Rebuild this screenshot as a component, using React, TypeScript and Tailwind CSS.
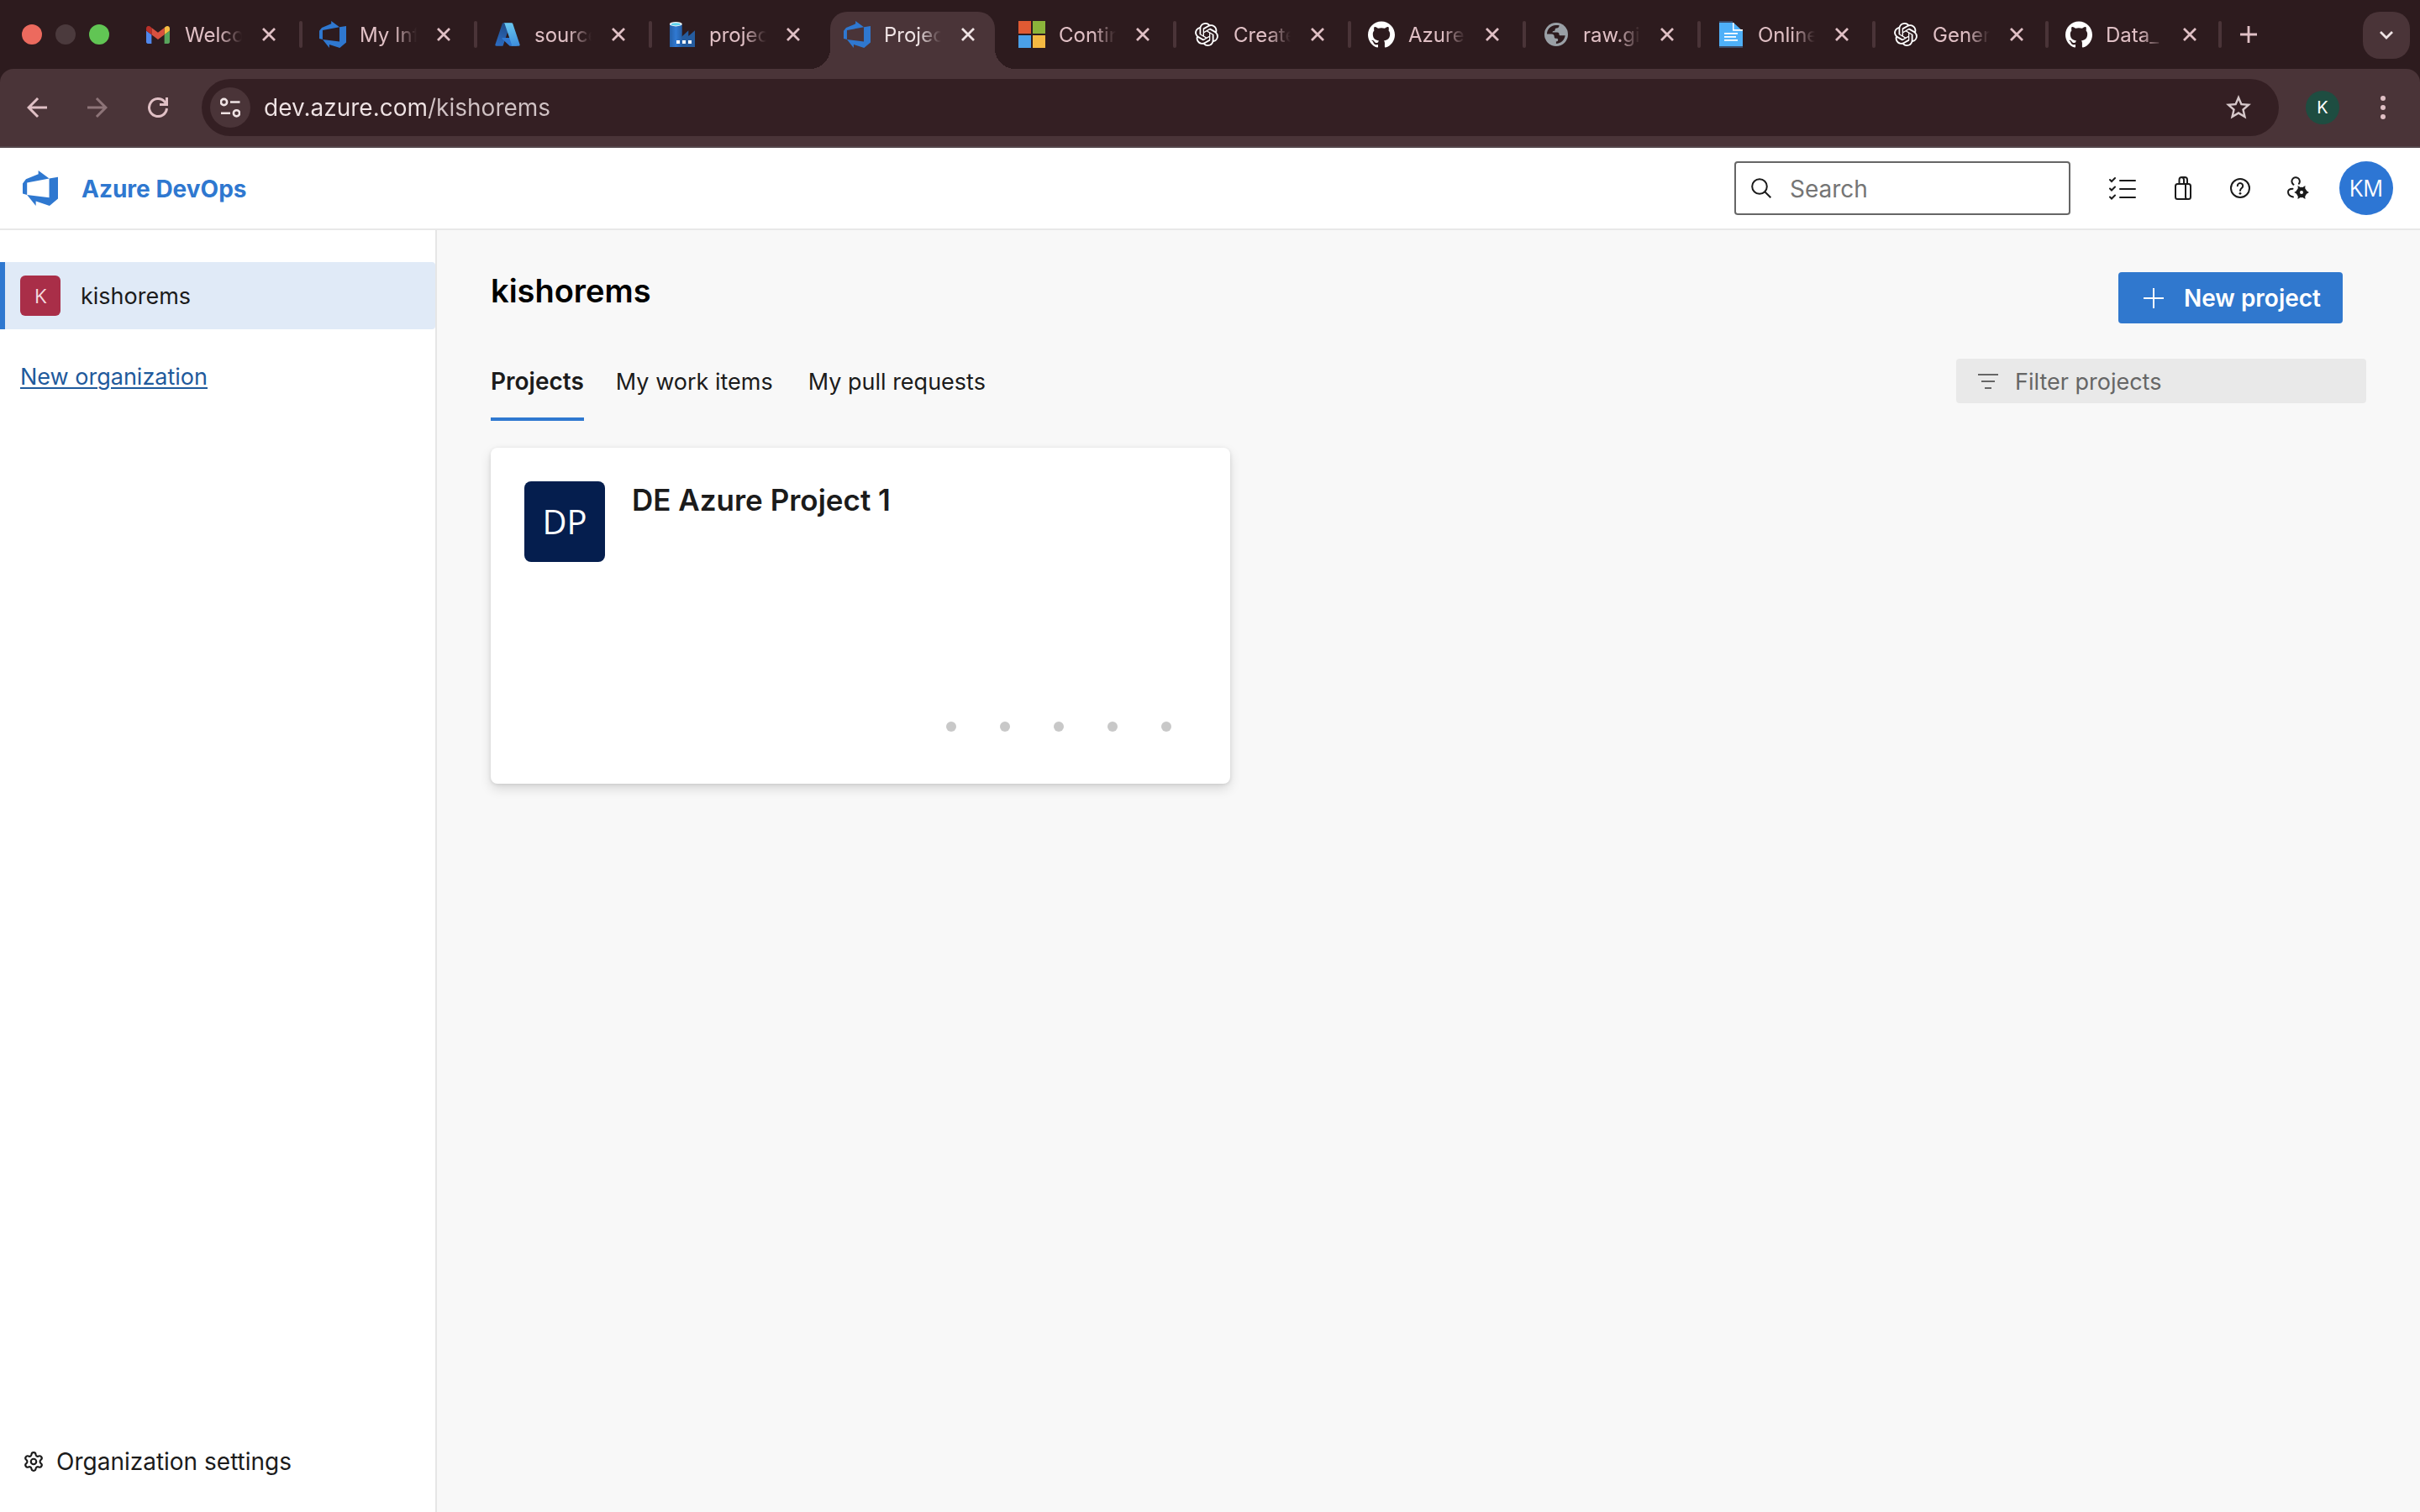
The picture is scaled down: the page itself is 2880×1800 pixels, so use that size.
import type { ReactNode } from "react";
import { Settings } from "lucide-react";
import { MdArrowBack, MdArrowForward, MdStarBorder } from "react-icons/md";
import { SiGithub, SiOpenai } from "react-icons/si";

function DevOpsLogo({ className }: { className: string }) {
  return (
    <svg viewBox="0 0 24 24" className={className} fill="#2f78d0" aria-hidden="true">
      <path d="M0 8.877L2.247 5.91l8.405-3.416V.022l7.37 5.393L2.966 8.338v8.225L0 15.707zm24-4.45v14.651l-5.753 4.9-9.303-3.057v3.056l-5.978-7.416 15.057 1.798V5.415z" />
    </svg>
  );
}

function GmailLogo() {
  return (
    <svg viewBox="52 42 88 66" className="w-[28px]" aria-hidden="true">
      <path fill="#5087ec" d="M58 108h14V74L52 59v43c0 3.32 2.69 6 6 6" />
      <path fill="#58a55c" d="M120 108h14c3.32 0 6-2.69 6-6V59l-20 15" />
      <path fill="#f6bd42" d="M120 48v26l20-15v-8c0-7.42-8.47-11.65-14.4-7.2" />
      <path fill="#d95140" d="M72 74V48l24 18 24-18v26L96 92" />
      <path fill="#b93029" d="M52 51v8l20 15V48l-5.6-4.4c-5.94-4.45-14.4-.22-14.4 7.2" />
    </svg>
  );
}

function AzureLogo() {
  return (
    <svg viewBox="0 0 96 96" className="w-[32px]" aria-hidden="true">
      <defs>
        <linearGradient id="azure-left" x1="0.6" y1="0" x2="0.3" y2="1">
          <stop offset="0" stopColor="#1f4b86" />
          <stop offset="1" stopColor="#2c6bc0" />
        </linearGradient>
        <linearGradient id="azure-right" x1="0.4" y1="0" x2="0.6" y2="1">
          <stop offset="0" stopColor="#69c8f0" />
          <stop offset="1" stopColor="#3f8fdc" />
        </linearGradient>
      </defs>
      <path fill="url(#azure-left)" d="M33.338 6.544h26.038l-27.03 80.087a4.152 4.152 0 0 1-3.933 2.824H8.149a4.145 4.145 0 0 1-3.928-5.47L29.404 9.368a4.152 4.152 0 0 1 3.934-2.825z" />
      <path fill="#2f78d0" d="M71.175 60.261h-41.29a1.911 1.911 0 0 0-1.305 3.309l26.532 24.764a4.171 4.171 0 0 0 2.846 1.121h23.38z" />
      <path fill="url(#azure-right)" d="M66.595 9.364a4.145 4.145 0 0 0-3.928-2.82H33.648a4.146 4.146 0 0 1 3.928 2.82l25.184 74.62a4.146 4.146 0 0 1-3.928 5.472h29.02a4.146 4.146 0 0 0 3.927-5.472z" />
    </svg>
  );
}

function FactoryLogo() {
  return (
    <svg viewBox="0 0 32 32" className="w-[32px]" aria-hidden="true">
      <defs>
        <linearGradient id="factory-tower" x1="0" x2="1">
          <stop offset="0" stopColor="#2560a8" />
          <stop offset="0.5" stopColor="#3079d2" />
          <stop offset="1" stopColor="#2560a8" />
        </linearGradient>
      </defs>
      <path fill="#255c9f" d="M15 19l8.3-7.7V18l7.7-6.7V31H15z" />
      <path fill="url(#factory-tower)" d="M1 3.5h14.7V31H1z" />
      <ellipse cx="8.3" cy="3.7" rx="7.4" ry="2.7" fill="#f2f2f2" />
      <ellipse cx="8.3" cy="3.9" rx="5.6" ry="1.7" fill="#5cd5ef" />
      <path fill="#fff" d="M9 23h4v4H9zM16 23h4v4h-4zM23 23h4v4h-4z" />
    </svg>
  );
}

function MicrosoftLogo() {
  return (
    <svg viewBox="0 0 32 32" className="w-[32px]" aria-hidden="true">
      <path fill="#e05a33" d="M0 0h15v15H0z" />
      <path fill="#8bb43a" d="M17 0h15v15H17z" />
      <path fill="#4aa0e8" d="M0 17h15v15H0z" />
      <path fill="#f4b942" d="M17 17h15v15H17z" />
    </svg>
  );
}

function GlobeLogo() {
  return (
    <svg viewBox="0 0 28 28" className="w-[28px]" aria-hidden="true">
      <circle cx="14" cy="14" r="14" fill="#9aa0a6" />
      <path fill="#2d1b1e" d="M3 13.600C3 8 7.500 3.200 13.500 3h4c.2 2-.8 3.300-3.200 3.600-1.200.1-1.600.8-1.600 1.700 0 1.100-.6 1.600-1.700 1.600-1.100 0-1.500.6-1.400 1.600h5.600c1.500 0 2.300.9 2.300 2.200 0 1 .6 1.600 1.700 1.600h5.500c-.5 5-5 9.600-10.800 9.700v-2.600c1.600 0 2.300-.7 2.300-2 0-1-.7-1.700-1.700-1.700h-1.200c-1 0-1.500-.6-1.500-1.600 0-2-1-3.500-3.300-3.500z" />
    </svg>
  );
}

function DocLogo() {
  return (
    <svg viewBox="0 0 28 32" className="w-[28px]" aria-hidden="true">
      <path fill="#3b4a66" d="M0 0h16v2H0zM0 30h28v2H0z" />
      <path fill="#4eb0f8" d="M0 2h17l11 10v18H0z" />
      <path fill="#fff" d="M16 2h1.500v8H28v1.800H16z" />
      <path fill="#fff" d="M6 14h16v1.800H6zM6 18h14v1.800H6zM6 22h16v1.800H6z" />
    </svg>
  );
}

function CloseIcon() {
  return (
    <svg viewBox="0 0 16 16" className="w-4" stroke="currentColor" strokeWidth="2.800" aria-hidden="true">
      <path d="M1 1l14 14M15 1L1 15" />
    </svg>
  );
}

type Tab = { title: string; icon: ReactNode; width: string; active?: boolean; divider?: boolean };

const wide = "w-[208px]";
const narrow = "w-[206px]";

const tabs: Tab[] = [
  { title: "Welco", icon: <GmailLogo />, width: wide, divider: true },
  { title: "My Inf", icon: <DevOpsLogo className="w-[32px]" />, width: wide, divider: true },
  { title: "source", icon: <AzureLogo />, width: wide, divider: true },
  { title: "projec", icon: <FactoryLogo />, width: wide },
  { title: "Projec", icon: <DevOpsLogo className="w-[32px]" />, width: wide, active: true },
  { title: "Contin", icon: <MicrosoftLogo />, width: wide, divider: true },
  { title: "Create", icon: <SiOpenai className="size-[28px] text-white" />, width: wide, divider: true },
  { title: "Azure", icon: <SiGithub className="size-[32px] text-white" />, width: wide, divider: true },
  { title: "raw.gi", icon: <GlobeLogo />, width: wide, divider: true },
  { title: "Online", icon: <DocLogo />, width: wide, divider: true },
  { title: "Gener", icon: <SiOpenai className="size-[28px] text-white" />, width: narrow, divider: true },
  { title: "Data_", icon: <SiGithub className="size-[32px] text-white" />, width: narrow, divider: true },
];

function BrowserTab({ tab }: { tab: Tab }) {
  return (
    <li className={`${tab.width} relative flex min-w-0 items-center pl-5 ${tab.active ? "text-[#efe3e4]" : "text-[#e0c0c5]"}`}>
      {tab.active && (
        <span className="absolute top-[14px] right-2 bottom-0 left-1 rounded-t-[20px] bg-[#4a3438]">
          <span className="absolute right-full bottom-0 size-6 bg-[radial-gradient(circle_at_0_0,transparent_24px,#4a3438_24px)]" />
          <span className="absolute bottom-0 left-full size-6 bg-[radial-gradient(circle_at_100%_0,transparent_24px,#4a3438_24px)]" />
        </span>
      )}
      <button type="button" className="relative flex min-w-0 items-center gap-4">
        <span className="flex w-8 shrink-0 justify-center">{tab.icon}</span>
        <span className="w-[68px] overflow-hidden pt-[2px] text-left text-[24px] leading-8 whitespace-nowrap [mask-image:linear-gradient(to_right,black_60%,transparent)]">
          {tab.title}
        </span>
      </button>
      <button type="button" aria-label={`Close ${tab.title}`} className="relative ml-4 flex size-8 shrink-0 items-center justify-center">
        <CloseIcon />
      </button>
      {tab.divider && <span className="ml-auto h-8 w-1 shrink-0 rounded-full bg-[#4a3438]" />}
    </li>
  );
}

function TabStrip() {
  return (
    <div className="flex h-[82px] bg-[#2d1b1e]">
      <div className="flex w-[152px] shrink-0 items-center gap-4 pl-[26px]">
        <button type="button" aria-label="Close window" className="size-6 rounded-full bg-[#ec6a5e]" />
        <button type="button" aria-label="Minimize window" className="size-6 rounded-full bg-[#4b3a3d]" />
        <button type="button" aria-label="Zoom window" className="size-6 rounded-full bg-[#61c554]" />
      </div>
      <ul className="flex min-w-0">
        {tabs.map((tab, index) => (
          <BrowserTab key={index} tab={tab} />
        ))}
      </ul>
      <button type="button" aria-label="New tab" className="ml-2 flex w-12 shrink-0 items-center justify-center text-[#e0c0c5]">
        <svg viewBox="0 0 20 20" className="w-5" stroke="currentColor" strokeWidth="2.800" aria-hidden="true">
          <path d="M10 0v20M0 10h20" />
        </svg>
      </button>
      <button type="button" aria-label="Search tabs" className="mt-[14px] mr-3 ml-auto flex size-14 shrink-0 items-center justify-center rounded-[20px] bg-[#4a3438] text-[#efe3e4]">
        <svg viewBox="0 0 16 10" className="w-4" fill="none" stroke="currentColor" strokeWidth="2.800" aria-hidden="true">
          <path d="M1 1l7 7 7-7" />
        </svg>
      </button>
    </div>
  );
}

function Toolbar() {
  return (
    <div className="bg-[#2d1b1e]">
      <div className="flex h-[94px] items-center rounded-t-[16px] border-b-2 border-[#53464a] bg-[#4a3438] pr-5 pl-5 text-[#e0c0c5]">
        <div className="flex gap-6">
          <button type="button" aria-label="Back" className="flex size-12 items-center justify-center">
            <MdArrowBack className="size-9" />
          </button>
          <button type="button" aria-label="Forward" className="flex size-12 items-center justify-center text-[#8d7478]">
            <MdArrowForward className="size-9" />
          </button>
          <button type="button" aria-label="Reload" className="flex size-12 items-center justify-center">
            <svg viewBox="0 0 24 24" className="w-6" fill="none" stroke="currentColor" strokeWidth="3" aria-hidden="true">
              <path d="M22.500 13A10.500 10.500 0 1 1 20 5.200L22.500 8" />
              <path d="M22.500 0v8.500H14" />
            </svg>
          </button>
        </div>
        <div className="ml-7 flex h-[68px] flex-1 items-center rounded-full bg-[#341f23] pr-7 pl-[10px]">
          <button type="button" aria-label="Site information" className="flex size-12 items-center justify-center rounded-full bg-[#4a3438] text-[#efe3e4]">
            <svg viewBox="0 0 24 24" className="w-6" fill="none" stroke="currentColor" strokeWidth="2.600" aria-hidden="true">
              <circle cx="4.500" cy="5.500" r="3.600" />
              <path d="M12 5.500h11.500M1 18.800h11" />
              <circle cx="19.500" cy="18.800" r="3.600" />
            </svg>
          </button>
          <input
            aria-label="Address"
            defaultValue="dev.azure.com/kishorems"
            className="ml-4 min-w-0 flex-1 bg-[linear-gradient(to_right,#efe3e4_196px,#d0c2c4_196px)] bg-clip-text text-[28px] leading-9 text-transparent outline-none"
          />
          <button type="button" aria-label="Bookmark this tab" className="flex w-10 items-center justify-center text-[#d6c8ca]">
            <MdStarBorder className="size-9" />
          </button>
        </div>
        <button type="button" aria-label="Profile" className="ml-8 size-10 rounded-full bg-[#1e4d41] text-[20px] leading-10 text-white">
          K
        </button>
        <button type="button" aria-label="Menu" className="ml-7 flex h-12 w-12 flex-col items-center justify-center gap-[5px]">
          <span className="size-[6px] rounded-full bg-current" />
          <span className="size-[6px] rounded-full bg-current" />
          <span className="size-[6px] rounded-full bg-current" />
        </button>
      </div>
    </div>
  );
}

function GearUserIcon() {
  return (
    <svg viewBox="0 0 26 28" className="w-[26px]" aria-hidden="true">
      <g fill="none" stroke="currentColor" strokeWidth="2" strokeLinecap="round">
        <path d="M7.500 9.800A4.700 4.700 0 1 1 14 8.600" />
        <path d="M6.500 14.800C3 14.800 1 16 1 18.500c0 3 2.500 5.200 6 6" />
      </g>
      <g fill="currentColor">
        <path fillRule="evenodd" d="M17 12.800a6.200 6.200 0 1 1 0 12.400 6.200 6.200 0 0 1 0-12.400zm0 4.200a2 2 0 1 0 0 4 2 2 0 0 0 0-4z" />
        <path d="M12.500 11l4 2.500-3.500 2.500zM21.500 11l-4 2.500 3.500 2.500zM8.300 19l4-2.500v5zM25.900 19l-4-2.500v5zM12.500 27l4-2.500-3.500-2.500zM21.500 27l-4-2.500 3.500-2.500z" />
      </g>
    </svg>
  );
}

function AppHeader() {
  return (
    <header className="flex h-[98px] items-center border-b-2 border-[#e8e8e8] bg-white pr-8 pl-[27px] text-[#1b1b1b]">
      <a href="#home" className="flex items-center gap-7 text-[28px] leading-9 font-bold text-[#2f78d0]">
        <DevOpsLogo className="w-[42px]" />
        <span className="pt-[2px]">Azure DevOps</span>
      </a>
      <label className="ml-auto flex h-16 w-[400px] items-center rounded-[4px] border-2 border-[#666666] pl-[18px]">
        <svg viewBox="0 0 24 24" className="w-6 shrink-0" fill="none" stroke="currentColor" strokeWidth="2" aria-hidden="true">
          <circle cx="10" cy="10" r="8.800" />
          <path d="M16 16l7.300 7.300" />
        </svg>
        <input type="search" aria-label="Search" placeholder="Search" className="ml-[22px] min-w-0 flex-1 pt-[2px] text-[28px] leading-9 outline-none placeholder:text-[#757575]" />
      </label>
      <div className="ml-[46px] flex items-center">
        <button type="button" aria-label="My work" className="flex">
          <svg viewBox="0 0 32 28" className="w-8" fill="none" stroke="currentColor" strokeWidth="2" strokeLinecap="round" aria-hidden="true">
            <path d="M13 5h18M13 15h18M13 25h18" />
            <path d="M1 4l2 2 4-4M1 14.500l2 2 4-4M1 24.500l2 2 4-4" />
          </svg>
        </button>
        <button type="button" aria-label="Marketplace" className="ml-[46px] flex">
          <svg viewBox="0 0 20 28" className="w-5" fill="none" stroke="currentColor" strokeWidth="2" aria-hidden="true">
            <rect x="1" y="9" width="18" height="18" rx="2.500" />
            <path d="M5.500 9V4a3 3 0 0 1 3-3h3.500a3 3 0 0 1 3 3v5M8.500 1a3 3 0 0 1 2.500 3v5M13 9v15.500c0 1.500.5 2.300 1.800 2.500" />
          </svg>
        </button>
        <button type="button" aria-label="Help" className="ml-[46px] flex">
          <svg viewBox="0 0 24 24" className="w-6" fill="none" stroke="currentColor" strokeWidth="2" aria-hidden="true">
            <circle cx="12" cy="12" r="11" />
            <path d="M8.800 9.200a3.200 3.200 0 1 1 5.200 2.500c-1.200 1-2 1.600-2 3.300" strokeLinecap="round" />
            <circle cx="12" cy="18.300" r="1.400" fill="currentColor" stroke="none" />
          </svg>
        </button>
        <button type="button" aria-label="User settings" className="ml-11 flex">
          <GearUserIcon />
        </button>
        <button type="button" aria-label="Account" className="ml-9 size-16 rounded-full bg-[#2d76d4] font-['Open_Sans',sans-serif] text-[27px] leading-[64px] text-white">
          KM
        </button>
      </div>
    </header>
  );
}

function Sidebar() {
  return (
    <aside className="flex w-[520px] shrink-0 flex-col border-r-2 border-[#e6e6e6] bg-white pt-[38px] text-[27px] leading-9 text-[#1b1b1b]">
      <a href="#kishorems" className="flex h-20 items-center gap-6 rounded-r-[4px] border-l-[6px] border-[#2f78d0] bg-[#e0eaf7] pl-[18px]">
        <span className="flex size-12 items-center justify-center rounded-[6px] bg-[#a92e48] font-['Open_Sans',sans-serif] text-[24px] text-[#f3d9df]">K</span>
        <span className="pt-[2px]">kishorems</span>
      </a>
      <a href="#new-organization" className="mt-[39px] self-start pl-6 text-[#1f5a9c] underline decoration-2 underline-offset-3">
        New organization
      </a>
      <a href="#settings" className="mt-auto mb-[42px] flex items-center gap-[14px] pl-[27px] text-[28px]">
        <Settings className="size-[26px]" strokeWidth={2} />
        Organization settings
      </a>
    </aside>
  );
}

function ProjectCard() {
  return (
    <a href="#project" className="mt-8 flex h-[400px] w-[880px] flex-col rounded-lg bg-white p-10 shadow-[0_6px_14px_rgba(0,0,0,0.13),0_1px_4px_rgba(0,0,0,0.10)]">
      <div className="flex gap-8">
        <span className="flex size-24 items-center justify-center rounded-lg bg-[#051e4e] font-['Open_Sans',sans-serif] text-[40px] text-white">DP</span>
        <h2 className="text-[35px] leading-[44px] font-semibold text-[#1b1b1b]">DE Azure Project 1</h2>
      </div>
      <div className="mt-auto mr-[30px] mb-[22px] flex justify-end gap-[52px]">
        {[0, 1, 2, 3, 4].map((dot) => (
          <span key={dot} className="size-3 rounded-full bg-[#c8c8c8]" />
        ))}
      </div>
    </a>
  );
}

function ProjectsPage() {
  return (
    <main className="flex-1 bg-[#f8f8f8] px-16 pt-[50px] text-[#1b1b1b]">
      <div className="flex items-start justify-between">
        <h1 className="text-[38px] leading-[44px] font-semibold text-black">kishorems</h1>
        <button type="button" className="mr-7 flex h-[61px] items-center gap-6 rounded-[4px] bg-[#3078ce] pr-[26px] pl-[30px] text-[28px] leading-9 font-semibold text-white">
          <svg viewBox="0 0 24 24" className="w-6" stroke="currentColor" strokeWidth="2" aria-hidden="true">
            <path d="M12 0v24M0 12h24" />
          </svg>
          New project
        </button>
      </div>
      <div className="mt-[42px] flex items-start justify-between">
        <nav className="flex text-[27px] leading-9">
          <a href="#projects" className="border-b-4 border-[#2f78d0] pt-[9px] pb-[25px] text-[28px] font-semibold">Projects</a>
          <a href="#work-items" className="ml-[38px] pt-[10px]">My work items</a>
          <a href="#pull-requests" className="ml-[42px] pt-[10px]">My pull requests</a>
        </nav>
        <label className="flex h-[53px] w-[488px] items-center rounded-[4px] bg-[#e9e9e9] pl-[26px]">
          <svg viewBox="0 0 24 18" className="w-6 shrink-0" stroke="#666666" strokeWidth="2" aria-hidden="true">
            <path d="M0 1h24M4 9h16M8 17h8" />
          </svg>
          <input type="text" aria-label="Filter projects" placeholder="Filter projects" className="ml-5 min-w-0 flex-1 pt-[2px] text-[27px] leading-9 outline-none placeholder:text-[#666666]" />
        </label>
      </div>
      <ProjectCard />
    </main>
  );
}

export default function App() {
  return (
    <div className="flex min-h-screen flex-col font-['Inter',sans-serif]">
      <TabStrip />
      <Toolbar />
      <AppHeader />
      <div className="flex flex-1">
        <Sidebar />
        <ProjectsPage />
      </div>
    </div>
  );
}
